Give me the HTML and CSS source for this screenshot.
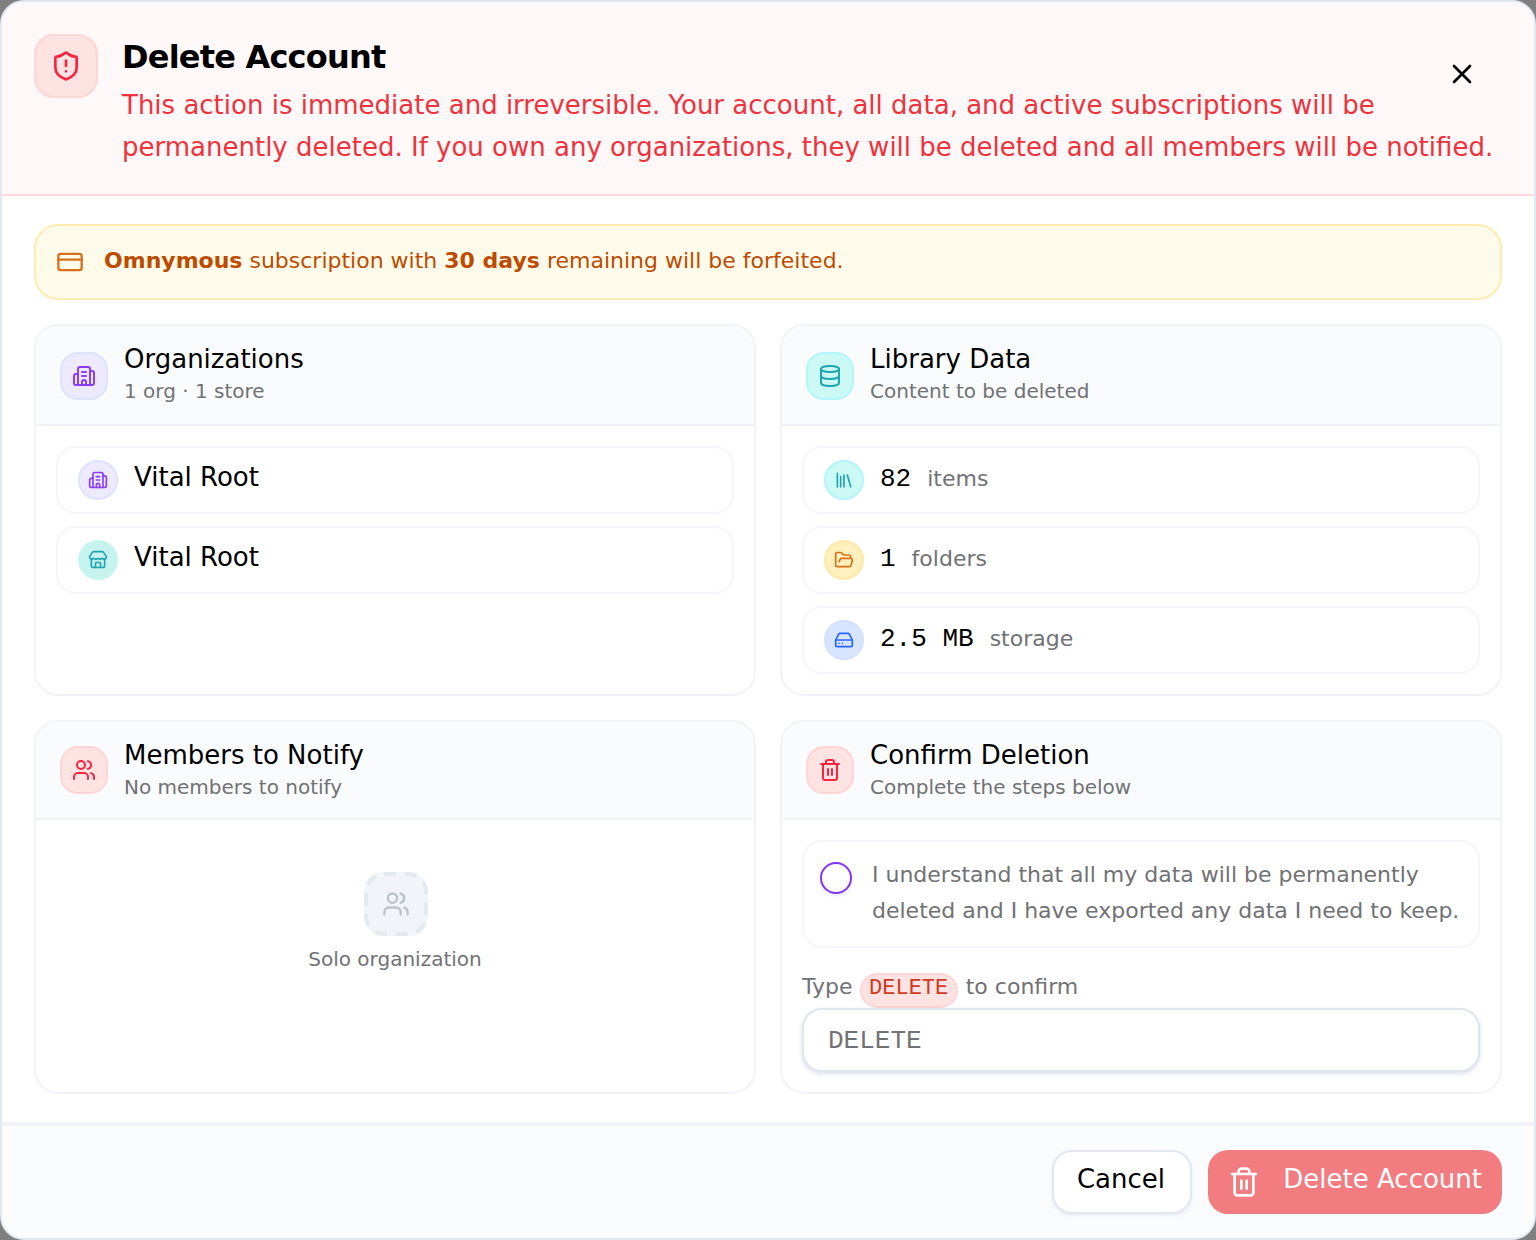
FILE: index.html
```html
<!DOCTYPE html>
<html lang="en">
<head>
    <meta charset="UTF-8">
    <meta name="viewport" content="width=device-width, initial-scale=1.0">
    <title>Delete Account</title>
    <link rel="stylesheet" href="styles.css">
</head>
<body>

    <!-- Shared icons -->
    <svg class="icon-defs" width="0" height="0">
        <symbol id="shield" viewBox="0 0 24 24"><path d="M20 13c0 5-3.5 7.5-7.66 8.95a1 1 0 0 1-.67-.01C7.5 20.5 4 18 4 13V6a1 1 0 0 1 1-1c2 0 4.5-1.2 6.24-2.72a1.17 1.17 0 0 1 1.52 0C14.51 3.81 17 5 19 5a1 1 0 0 1 1 1z"/><path d="M12 8v4M12 16h.01"/></symbol>
        <symbol id="close" viewBox="0 0 24 24"><path d="M18 6 6 18M6 6l12 12"/></symbol>
        <symbol id="card" viewBox="0 0 24 24"><rect x="2" y="5" width="20" height="14" rx="2"/><path d="M2 10h20"/></symbol>
        <symbol id="building" viewBox="0 0 24 24"><path d="M10 12h4M10 8h4M14 21v-3a2 2 0 0 0-4 0v3"/><path d="M6 10H4a2 2 0 0 0-2 2v7a2 2 0 0 0 2 2h16a2 2 0 0 0 2-2V9a2 2 0 0 0-2-2h-2"/><path d="M6 21V5a2 2 0 0 1 2-2h8a2 2 0 0 1 2 2v16"/></symbol>
        <symbol id="store" viewBox="0 0 24 24"><path d="M15 21v-5a1 1 0 0 0-1-1h-4a1 1 0 0 0-1 1v5"/><path d="M17.774 10.31a1.12 1.12 0 0 0-1.549 0 2.5 2.5 0 0 1-3.451 0 1.12 1.12 0 0 0-1.548 0 2.5 2.5 0 0 1-3.452 0 1.12 1.12 0 0 0-1.549 0 2.5 2.5 0 0 1-3.77-3.248l2.889-4.184A2 2 0 0 1 7 2h10a2 2 0 0 1 1.653.873l2.895 4.192a2.5 2.5 0 0 1-3.774 3.244"/><path d="M4 10.95V19a2 2 0 0 0 2 2h12a2 2 0 0 0 2-2v-8.05"/></symbol>
        <symbol id="database" viewBox="0 0 24 24"><ellipse cx="12" cy="5" rx="9" ry="3"/><path d="M3 5v14a9 3 0 0 0 18 0V5"/><path d="M3 12a9 3 0 0 0 18 0"/></symbol>
        <symbol id="library" viewBox="0 0 24 24"><path d="m16 6 4 14M12 6v14M8 8v12M4 4v16"/></symbol>
        <symbol id="folder" viewBox="0 0 24 24"><path d="m6 14 1.5-2.9A2 2 0 0 1 9.24 10H20a2 2 0 0 1 1.94 2.5l-1.54 6a2 2 0 0 1-1.95 1.5H4a2 2 0 0 1-2-2V5a2 2 0 0 1 2-2h3.9a2 2 0 0 1 1.69.9l.81 1.2a2 2 0 0 0 1.67.9H18a2 2 0 0 1 2 2v2"/></symbol>
        <symbol id="drive" viewBox="0 0 24 24"><path d="M22 12H2"/><path d="M5.45 5.11 2 12v6a2 2 0 0 0 2 2h16a2 2 0 0 0 2-2v-6l-3.45-6.89A2 2 0 0 0 16.76 4H7.24a2 2 0 0 0-1.79 1.11z"/><path d="M6 16h.01M10 16h.01"/></symbol>
        <symbol id="users" viewBox="0 0 24 24"><path d="M16 21v-2a4 4 0 0 0-4-4H6a4 4 0 0 0-4 4v2"/><circle cx="9" cy="7" r="4"/><path d="M22 21v-2a4 4 0 0 0-3-3.87M16 3.13a4 4 0 0 1 0 7.75"/></symbol>
        <symbol id="trash" viewBox="0 0 24 24"><path d="M3 6h18M19 6v14c0 1-1 2-2 2H7c-1 0-2-1-2-2V6M8 6V4c0-1 1-2 2-2h4c1 0 2 1 2 2v2M10 11v6M14 11v6"/></symbol>
    </svg>

    <div class="dialog">
        <div class="dialog-header">
            <div class="badge badge-lg red"><svg class="icon icon-32"><use href="#shield"/></svg></div>
            <div class="header-text">
                <h2>Delete Account</h2>
                <p>This action is immediate and irreversible. Your account, all data, and active subscriptions will be permanently deleted. If you own any organizations, they will be deleted and all members will be notified.</p>
            </div>
            <button class="close-btn" aria-label="Close"><svg class="icon icon-32"><use href="#close"/></svg></button>
        </div>

        <div class="dialog-body">
            <div class="notice">
                <svg class="icon icon-28"><use href="#card"/></svg>
                <p><strong>Omnymous</strong> subscription with <strong>30 days</strong> remaining will be forfeited.</p>
            </div>

            <div class="cards">
                <div class="card">
                    <div class="card-header">
                        <div class="badge violet"><svg class="icon"><use href="#building"/></svg></div>
                        <div class="card-title">
                            <h3>Organizations</h3>
                            <p>1 org · 1 store</p>
                        </div>
                    </div>
                    <div class="card-body">
                        <div class="row">
                            <div class="badge round violet"><svg class="icon icon-20"><use href="#building"/></svg></div>
                            <span class="name">Vital Root</span>
                        </div>
                        <div class="row">
                            <div class="badge round mint"><svg class="icon icon-20"><use href="#store"/></svg></div>
                            <span class="name">Vital Root</span>
                        </div>
                    </div>
                </div>

                <div class="card">
                    <div class="card-header">
                        <div class="badge teal"><svg class="icon"><use href="#database"/></svg></div>
                        <div class="card-title">
                            <h3>Library Data</h3>
                            <p>Content to be deleted</p>
                        </div>
                    </div>
                    <div class="card-body">
                        <div class="row">
                            <div class="badge round teal"><svg class="icon icon-20"><use href="#library"/></svg></div>
                            <span class="count">82</span>
                            <span class="unit">items</span>
                        </div>
                        <div class="row">
                            <div class="badge round amber"><svg class="icon icon-20"><use href="#folder"/></svg></div>
                            <span class="count">1</span>
                            <span class="unit">folders</span>
                        </div>
                        <div class="row">
                            <div class="badge round blue"><svg class="icon icon-20"><use href="#drive"/></svg></div>
                            <span class="count">2.5 MB</span>
                            <span class="unit">storage</span>
                        </div>
                    </div>
                </div>

                <div class="card">
                    <div class="card-header short">
                        <div class="badge red"><svg class="icon"><use href="#users"/></svg></div>
                        <div class="card-title">
                            <h3>Members to Notify</h3>
                            <p>No members to notify</p>
                        </div>
                    </div>
                    <div class="card-body empty">
                        <div class="badge badge-lg dashed">
                            <svg class="dash-outline" viewBox="0 0 64 64"><rect x="2" y="2" width="60" height="60" rx="18"/></svg>
                            <svg class="icon icon-28"><use href="#users"/></svg>
                        </div>
                        <p>Solo organization</p>
                    </div>
                </div>

                <div class="card">
                    <div class="card-header short">
                        <div class="badge red"><svg class="icon"><use href="#trash"/></svg></div>
                        <div class="card-title">
                            <h3>Confirm Deletion</h3>
                            <p>Complete the steps below</p>
                        </div>
                    </div>
                    <div class="card-body confirm">
                        <label class="consent">
                            <input type="checkbox" class="check">
                            <span>I understand that all my data will be permanently deleted and I have exported any data I need to keep.</span>
                        </label>
                        <label class="type-label" for="confirmText">Type <code>DELETE</code> to confirm</label>
                        <input type="text" id="confirmText" class="confirm-input" placeholder="DELETE">
                    </div>
                </div>
            </div>
        </div>

        <div class="dialog-footer">
            <button class="btn btn-cancel"><span>Cancel</span></button>
            <button class="btn btn-delete"><svg class="icon icon-32"><use href="#trash"/></svg><span>Delete Account</span></button>
        </div>
    </div>

</body>
</html>
```

FILE: styles.css
```css
* {
    box-sizing: border-box;
}

body {
    margin: 0;
    background: #7f7f7f;
    font-family: "DejaVu Sans", sans-serif;
    color: #000;
}

h2, h3, p {
    margin: 0;
}

button, input {
    font-family: inherit;
}

.icon-defs {
    position: absolute;
}

.icon {
    width: 24px;
    height: 24px;
    flex-shrink: 0;
    fill: none;
    stroke: currentColor;
    stroke-width: 2;
    stroke-linecap: round;
    stroke-linejoin: round;
}

.icon-20 {
    width: 20px;
    height: 20px;
}

.icon-28 {
    width: 28px;
    height: 28px;
}

.icon-32 {
    width: 32px;
    height: 32px;
}

.dialog {
    position: relative;
    display: flex;
    flex-direction: column;
    width: 1536px;
    height: 1240px;
    background: #fff;
    border: 2px solid #e2e8f0;
    border-radius: 24px;
    overflow: hidden;
}

/* Header */
.dialog-header {
    display: flex;
    align-items: flex-start;
    gap: 24px;
    height: 194px;
    padding: 32px 32px 0;
    background: #fff8f8;
    border-bottom: 2px solid #ffd9da;
}

.header-text {
    flex: 1;
}

.header-text h2 {
    font-size: 32px;
    line-height: 40px;
    letter-spacing: -0.8px;
    margin: 3px 0 7px;
}

.header-text p {
    width: 1380px;
    font-size: 26px;
    line-height: 42.25px;
    color: #f0323c;
}

.close-btn {
    position: absolute;
    top: 56px;
    right: 56px;
    display: flex;
    padding: 0;
    border: none;
    background: none;
    color: #000;
}

/* Icon badges */
.badge {
    display: flex;
    align-items: center;
    justify-content: center;
    flex-shrink: 0;
    width: 48px;
    height: 48px;
    border: 2px solid;
    border-radius: 18px;
}

.badge-lg {
    width: 64px;
    height: 64px;
    border-radius: 20px;
}

.badge.round {
    width: 40px;
    height: 40px;
    border-radius: 50%;
}

.badge .icon {
    color: var(--ink);
}

.red {
    --ink: #fb2440;
    background: #ffe3e3;
    border-color: #ffd5d5;
}

.violet {
    --ink: #8b3dff;
    background: #ede9fe;
    border-color: #dde2ff;
}

.teal {
    --ink: #20a4b0;
    background: #cbfaf5;
    border-color: #b2f5fb;
}

.mint {
    --ink: #20a4b0;
    background: #c6f3ee;
    border-color: #c6f5f0;
}

.amber {
    --ink: #d96f18;
    background: #fff0bd;
    border-color: #ffe8a8;
}

.blue {
    --ink: #2864ff;
    background: #d8e5ff;
    border-color: #d4e0ff;
}

.badge.dashed {
    --ink: #bcc3c8;
    position: relative;
    margin-left: 2px;
    background: #f1f4f8;
    border: none;
}

.dash-outline {
    position: absolute;
    inset: 0;
    fill: none;
    stroke: #e3e9ed;
    stroke-width: 4;
    stroke-dasharray: 12 8.9;
}

/* Body */
.dialog-body {
    flex: 1;
    padding: 28px 32px;
}

.notice {
    display: flex;
    align-items: center;
    gap: 20px;
    height: 76px;
    margin-bottom: 24px;
    padding: 0 20px;
    background: #fffbea;
    border: 2px solid #ffebae;
    border-radius: 24px;
    color: #d5701c;
}

.notice p {
    padding-bottom: 4px;
    font-size: 22px;
    color: #bd4b00;
}

.cards {
    display: grid;
    grid-template-columns: 1fr 1fr;
    grid-template-rows: 372px 374px;
    gap: 24px;
}

.card {
    display: flex;
    flex-direction: column;
    background: #fff;
    border: 2px solid #f2f3f7;
    border-radius: 24px;
    overflow: hidden;
}

.card-header {
    display: flex;
    align-items: center;
    gap: 16px;
    height: 100px;
    padding: 2px 24px 0;
    background: #fafbfd;
    border-bottom: 2px solid #f2f3f7;
}

.card-header.short {
    height: 98px;
    padding-top: 0;
}

.card-title {
    height: 66px;
}

.short .card-title {
    height: 62px;
}

.card-title h3 {
    font-size: 26px;
    font-weight: normal;
    line-height: 32px;
}

.card-title p {
    font-size: 20px;
    line-height: 32px;
    color: #707274;
}

.card-body {
    display: flex;
    flex-direction: column;
    flex: 1;
    gap: 12px;
    padding: 20px;
}

.row {
    display: flex;
    align-items: center;
    gap: 16px;
    height: 68px;
    padding: 0 20px;
    border: 2px solid #f5f5fa;
    border-radius: 20px;
}

.name {
    padding-bottom: 6px;
    font-size: 26px;
}

.count {
    padding-bottom: 3px;
    font-family: "Liberation Mono", monospace;
    font-size: 26px;
}

.unit {
    padding-bottom: 4px;
    font-size: 22px;
    color: #707274;
}

.empty {
    align-items: center;
    gap: 11px;
    padding-top: 52px;
    font-size: 20px;
    color: #707274;
}

.confirm {
    gap: 0;
}

.consent {
    display: flex;
    align-items: flex-start;
    gap: 20px;
    height: 108px;
    padding: 15px 16px;
    border: 2px solid #f5f5fa;
    border-radius: 20px;
    font-size: 22px;
    line-height: 35.75px;
    color: #707274;
}

.check {
    appearance: none;
    flex-shrink: 0;
    width: 32px;
    height: 32px;
    margin: 5px 0 0;
    border: 2px solid #8233f5;
    border-radius: 50%;
    box-shadow: 0 2px 4px rgba(80, 60, 160, 0.12);
}

.type-label {
    height: 60px;
    padding-top: 21px;
    font-size: 22px;
    line-height: 36px;
    color: #707274;
}

.type-label code {
    display: inline-block;
    height: 35px;
    margin-right: 1px;
    padding: 0 7.5px;
    background: #ffe3e3;
    border: 2px solid #ffd5d5;
    border-radius: 18px;
    font-family: "Liberation Mono", monospace;
    font-size: 22px;
    line-height: 28px;
    color: #d03a1c;
}

.confirm-input {
    width: 100%;
    height: 64px;
    padding: 1px 24px 0;
    border: 2px solid #e1e6ee;
    border-radius: 20px;
    box-shadow: 0 2px 4px rgba(100, 116, 150, 0.22);
    font-family: "Liberation Mono", monospace;
    font-size: 26px;
}

.confirm-input::placeholder {
    color: #707274;
}

/* Footer */
.dialog-footer {
    display: flex;
    justify-content: flex-end;
    gap: 16px;
    height: 116px;
    padding: 24px 32px;
    background: #fafcfe;
    border-top: 4px solid #f2f4f7;
}

.btn {
    display: flex;
    align-items: center;
    justify-content: center;
    height: 64px;
    border: none;
    border-radius: 20px;
    font-size: 26px;
}

.btn span {
    padding-bottom: 6px;
}

.btn-cancel {
    width: 140px;
    padding: 0 2px 0 0;
    background: #fff;
    border: 2px solid #e2e6ee;
    box-shadow: 0 2px 4px rgba(100, 116, 160, 0.12);
    color: #000;
}

.btn-delete {
    justify-content: flex-end;
    gap: 23px;
    width: 294px;
    padding: 0 20px;
    background: #f37c81;
    color: #fff;
}
```
